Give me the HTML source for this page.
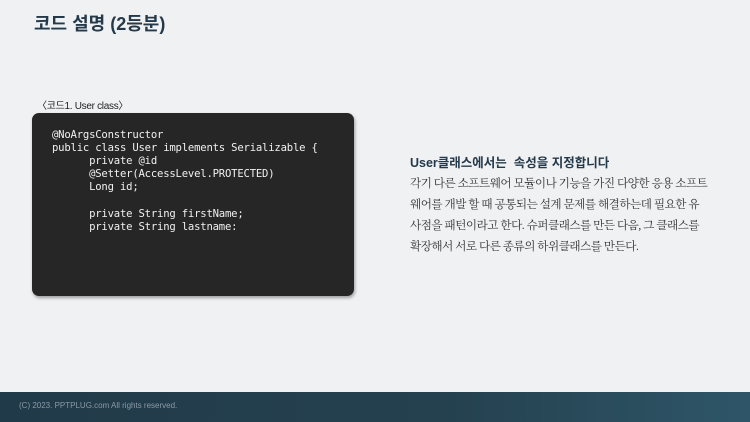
<!DOCTYPE html>
<html><head><meta charset="utf-8"><style>
body{margin:0;width:750px;height:422px;background:#eff1f3;position:relative;overflow:hidden;font-family:"Liberation Sans","Noto Sans CJK KR",sans-serif}
.t{position:absolute;left:34px;top:10px;font-size:18px;font-weight:bold;color:#24394a}
.cap{position:absolute;left:37px;top:97px;font-size:10px;color:#222;letter-spacing:-0.3px}
.code{position:absolute;left:32px;top:113px;width:322px;height:183px;background:#262626;border-radius:7px;box-shadow:1px 2px 3px rgba(0,0,0,.35)}
.code pre{margin:0;position:absolute;left:20px;top:16px;font-family:"DejaVu Sans Mono","Liberation Mono",monospace;font-size:10.6px;line-height:13.1px;color:#f0f0f0;letter-spacing:-0.2px}
.h{position:absolute;left:410px;top:152px;font-size:12.5px;font-weight:bold;color:#24394a}
.p{position:absolute;left:410px;top:173px;width:306px;font-family:"Liberation Serif","Noto Serif CJK SC",serif;font-size:11.6px;line-height:21px;color:#333;letter-spacing:-0.5px}
.f{position:absolute;left:0;top:392px;width:750px;height:30px;background:linear-gradient(90deg,#213a49,#25414f 60%,#2e5668)}
.f span{position:absolute;left:19px;top:9px;font-size:8px;color:#8a9aa5}
</style></head><body>
<div class="t">코드 설명 (2등분)</div>
<div class="cap">〈코드1. User class〉</div>
<div class="code"><pre>@NoArgsConstructor
public class User implements Serializable {
      private @id
      @Setter(AccessLevel.PROTECTED)
      Long id;

      private String firstName;
      private String lastname:</pre></div>
<div class="h">User클래스에서는&nbsp; 속성을 지정합니다</div>
<div class="p">각기 다른 소프트웨어 모듈이나 기능을 가진 다양한 응용 소프트<br>웨어를 개발 할 때 공통되는 설계 문제를 해결하는데 필요한 유<br>사점을 패턴이라고 한다. 슈퍼클래스를 만든 다음, 그 클래스를<br>확장해서 서로 다른 종류의 하위클래스를 만든다.</div>
<div class="f"><span>(C) 2023. PPTPLUG.com All rights reserved.</span></div>
</body></html>
